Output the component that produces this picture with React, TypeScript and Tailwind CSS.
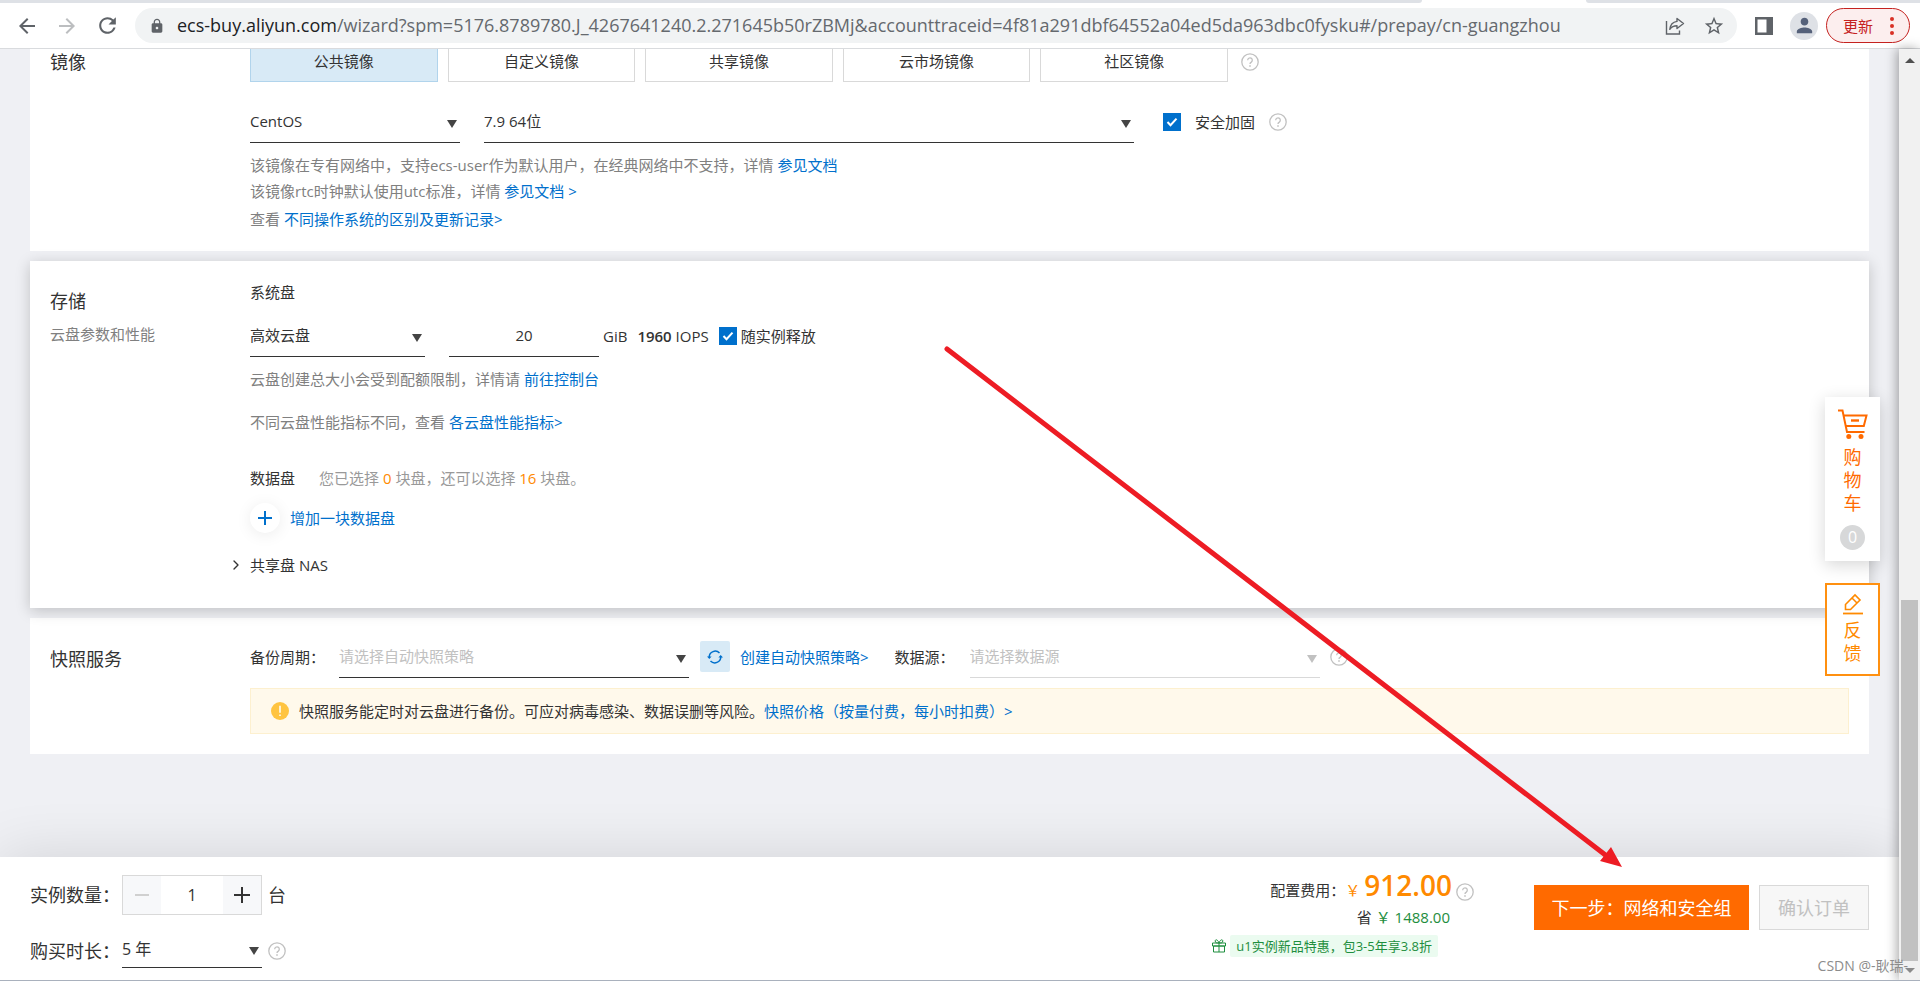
import React from 'react';
import {
  MdArrowBack,
  MdArrowForward,
  MdLock,
  MdPerson,
  MdRefresh,
  MdStarBorder,
} from 'react-icons/md';
import { ChevronRight } from 'lucide-react';
import clsx from 'clsx';

const imageTabs = ['公共镜像', '自定义镜像', '共享镜像', '云市场镜像', '社区镜像'];

const HelpIcon = () => (
  <svg className="w-[18px] h-[18px] shrink-0 text-[#c1c1c1]" viewBox="0 0 18 18" fill="none" stroke="currentColor" strokeWidth="1.3">
    <circle cx="9" cy="9" r="8.2" />
    <path d="M6.7 7.2a2.3 2.3 0 1 1 3.6 1.9c-.8.5-1.3.9-1.3 1.9" />
    <path d="M9 12.3v1.4" strokeWidth="1.6" />
  </svg>
);

interface LinkProps {
  children: React.ReactNode;
}

const Link: React.FC<LinkProps> = ({ children }) => (
  <a href="#" className="text-[#0070cc]">{children}</a>
);

interface SelectProps {
  label: string;
  value: string;
  className?: string;
  placeholder?: boolean;
  disabled?: boolean;
}

const Select: React.FC<SelectProps> = ({ label, value, className, placeholder, disabled }) => (
  <div className={clsx('relative border-b', disabled ? 'border-[#d9d9d9]' : 'border-[#333]', className)}>
    <select
      aria-label={label}
      disabled={disabled}
      className={clsx(
        'w-full h-full appearance-none bg-transparent outline-none pr-6 pb-[3px] opacity-100',
        placeholder ? 'text-[#c1c1c1]' : 'text-[#333]'
      )}
    >
      <option>{value}</option>
    </select>
    <svg
      className={clsx(
        'absolute right-[3px] top-1/2 -mt-1 w-2.5 h-[9px] pointer-events-none',
        disabled ? 'text-[#c1c1c1]' : 'text-[#444]'
      )}
      viewBox="0 0 10 9"
      fill="currentColor"
    >
      <path d="M0 1h10L5 9z" />
    </svg>
  </div>
);

interface CheckboxProps {
  label: string;
  className?: string;
}

const Checkbox: React.FC<CheckboxProps> = ({ label, className }) => (
  <label className={clsx('flex items-center', className)}>
    <span className="grid">
      <input
        type="checkbox"
        defaultChecked
        className="appearance-none w-[18px] h-[18px] bg-white border border-[#0070cc] checked:bg-[#0070cc] col-start-1 row-start-1"
      />
      <svg className="w-[18px] h-[18px] col-start-1 row-start-1 pointer-events-none" viewBox="0 0 18 18" fill="none" stroke="#fff" strokeWidth="2">
        <path d="M4.5 9l3 3.2 6-6.6" />
      </svg>
    </span>
    {label}
  </label>
);

const BrowserBar = () => (
  <header className="bg-white border-b border-[#d9dbde]">
    <div className="flex h-[3px] bg-white">
      <div className="flex-1 bg-[#dee1e6] rounded-br-sm" />
      <div className="w-[164px]" />
      <div className="w-[334px] bg-[#dee1e6] rounded-bl-sm" />
    </div>
    <div className="flex items-center h-[45px] pl-[15px] pr-2.5">
      <button aria-label="后退" className="w-6 mr-4 text-[#5f6368]"><MdArrowBack size={24} /></button>
      <button aria-label="前进" className="w-6 mr-4 text-[#bcbec0]"><MdArrowForward size={24} /></button>
      <button aria-label="刷新" className="w-6 mr-4 text-[#5f6368]"><MdRefresh size={25} /></button>
      <div className="flex flex-1 items-center h-[35px] rounded-full bg-[#f1f3f4] pl-3.5 pr-3 min-w-0">
        <MdLock size={16} className="text-[#5f6368] mr-3 shrink-0" />
        <div className="flex-1 pb-0.5 text-lg leading-6 whitespace-nowrap overflow-hidden text-[#65696e]">
          <span className="text-[#202124]">ecs-buy.aliyun.com</span>
          /wizard?spm=5176.8789780.J_4267641240.2.271645b50rZBMj&amp;accounttraceid=4f81a291dbf64552a04ed5da963dbc0fysku#/prepay/cn-guangzhou
        </div>
        <button aria-label="分享" className="mr-[18px]">
          <svg className="w-5 h-5" viewBox="0 0 20 20" fill="none" stroke="#5f6368" strokeWidth="1.4">
            <path d="M1.5 5v13h13v-3.5" />
            <path d="M12 2.5l6.5 5-6.5 5V9.7c-3.5 0-5.6 1.2-7.2 3.6C5.3 9 7.8 6 12 5.4z" strokeLinejoin="round" />
          </svg>
        </button>
        <button aria-label="收藏"><MdStarBorder size={22} className="text-[#5f6368]" /></button>
      </div>
      <button aria-label="侧边栏" className="ml-[18px]">
        <svg className="w-[18px] h-[18px]" viewBox="0 0 18 18" fill="#5f6368">
          <path d="M0 0h18v18H0zM2.5 2.5v13h9v-13z" fillRule="evenodd" />
        </svg>
      </button>
      <button aria-label="个人资料" className="ml-[17px] w-7 h-7 rounded-full bg-[#dee1e6] flex items-center justify-center">
        <MdPerson size={23} className="text-[#55617a]" />
      </button>
      <button className="ml-2 w-[84px] h-[35px] rounded-full border border-[#c5221f] bg-[#fceeee] text-[#c5221f] text-[15px] flex items-center justify-between pl-4 pr-[15px]">
        更新
        <svg className="w-1 h-[18px]" viewBox="0 0 4 18" fill="#d93025">
          <circle cx="2" cy="2" r="2" />
          <circle cx="2" cy="9" r="2" />
          <circle cx="2" cy="16" r="2" />
        </svg>
      </button>
    </div>
  </header>
);

const ImageSection = () => (
  <section className="flex bg-white px-5 pb-[19px]">
    <h2 className="w-[200px] shrink-0 text-lg leading-[26px]">镜像</h2>
    <div className="flex-1">
      <div className="flex">
        <div className="grid grid-cols-5 gap-2.5 w-[978px]">
          {imageTabs.map((tab, i) => (
            <button
              key={tab}
              className={clsx(
                'h-[33px] pb-2 border border-t-0',
                i === 0 ? 'bg-[#d8eaf6] border-[#b1d4ec]' : 'bg-white border-[#d9d9d9]'
              )}
            >
              {tab}
            </button>
          ))}
        </div>
        <div className="ml-[13px] mt-1"><HelpIcon /></div>
      </div>
      <div className="flex items-center mt-[21px]">
        <Select label="操作系统" value="CentOS" className="w-[210px] h-10" />
        <Select label="版本" value="7.9 64位" className="w-[650px] h-10 ml-6" />
        <div className="flex items-center ml-[29px] mb-[3px] gap-3.5">
          <Checkbox label="安全加固" className="gap-3.5" />
          <HelpIcon />
        </div>
      </div>
      <div className="mt-[9px] leading-[26px] text-[#808080]">
        <p>该镜像在专有网络中，支持ecs-user作为默认用户，在经典网络中不支持，详情 <Link>参见文档</Link></p>
        <p>该镜像rtc时钟默认使用utc标准，详情 <Link>参见文档 &gt;</Link></p>
        <p className="mt-0.5">查看 <Link>不同操作系统的区别及更新记录&gt;</Link></p>
      </div>
    </div>
  </section>
);

const StorageSection = () => (
  <section className="relative flex bg-white mt-2.5 px-5 pt-[19px] pb-[31px] shadow-[0_3px_14px_rgba(0,0,0,0.2)]">
    <div className="w-[200px] shrink-0 pt-2">
      <h2 className="text-lg leading-[26px]">存储</h2>
      <p className="mt-2 text-[#808080]">云盘参数和性能</p>
    </div>
    <div className="flex-1">
      <h3>系统盘</h3>
      <div className="flex items-center mt-[13px]">
        <Select label="系统盘类型" value="高效云盘" className="w-[175px] h-10" />
        <input aria-label="系统盘容量" defaultValue="20" className="w-[150px] h-10 ml-6 pb-[3px] border-b border-[#333] text-center outline-none" />
        <div className="flex items-center ml-1 mb-[3px] gap-2.5">
          <span>GiB</span>
          <span><b className="font-semibold">1960</b> IOPS</span>
          <Checkbox label="随实例释放" className="gap-1" />
        </div>
      </div>
      <p className="mt-2.5 text-[#808080]">云盘创建总大小会受到配额限制，详情请 <Link>前往控制台</Link></p>
      <p className="mt-[19px] text-[#808080]">不同云盘性能指标不同，查看 <Link>各云盘性能指标&gt;</Link></p>
      <div className="flex mt-8">
        <h3>数据盘</h3>
        <p className="ml-6 text-[#999]">
          您已选择 <span className="text-[#ff8a00]">0</span> 块盘，还可以选择 <span className="text-[#ff8a00]">16</span> 块盘。
        </p>
      </div>
      <button className="flex items-center gap-2.5 mt-[13px] text-[#0070cc]">
        <span className="w-[30px] h-[30px] rounded-full bg-white shadow-[0_2px_16px_rgba(0,0,0,0.08)] flex items-center justify-center">
          <svg className="w-[14px] h-[14px]" viewBox="0 0 14 14" stroke="currentColor" strokeWidth="2">
            <path d="M7 0v14M0 7h14" />
          </svg>
        </span>
        增加一块数据盘
      </button>
      <button className="flex items-center mt-5 -ml-[22px] gap-1.5">
        <ChevronRight className="w-4 h-4" strokeWidth={2} />
        共享盘 NAS
      </button>
    </div>
  </section>
);

const SnapshotSection = () => (
  <section className="flex bg-white mt-2.5 px-5 py-5">
    <h2 className="w-[200px] shrink-0 pt-2 text-lg leading-[26px]">快照服务</h2>
    <div className="flex-1">
      <div className="flex items-center">
        <span className="w-[89px] mb-[3px]">备份周期：</span>
        <Select label="备份周期" value="请选择自动快照策略" placeholder className="w-[350px] h-10" />
        <div className="flex items-center mb-[3px]">
          <button aria-label="刷新策略" className="w-[30px] h-[31px] ml-[11px] mr-2.5 bg-[#d8eaf6] rounded-xs flex items-center justify-center text-[#0070cc]">
            <svg className="w-4 h-4" viewBox="0 0 16 16" fill="none" stroke="currentColor" strokeWidth="1.5">
              <path d="M2.2 8A6 6 0 0 1 12.500 4M13.800 8A6 6 0 0 1 3.500 12" />
              <path d="M0 7.500h4.600L2.300 10zM11.400 8.500H16L13.700 6z" fill="currentColor" stroke="none" />
            </svg>
          </button>
          <Link>创建自动快照策略&gt;</Link>
          <span className="w-[75px] ml-[26px]">数据源：</span>
        </div>
        <Select label="数据源" value="请选择数据源" placeholder disabled className="w-[350px] h-10 mr-2.5" />
        <div className="mb-[3px]"><HelpIcon /></div>
      </div>
      <div className="flex items-center h-[46px] mt-2.5 pl-5 bg-[#fff9eb] border border-[#fdf0cf]">
        <svg className="w-[18px] h-[18px] mr-2.5" viewBox="0 0 18 18">
          <circle cx="9" cy="9" r="9" fill="#ffc440" />
          <path d="M9 3.800v7M9 12.500v1.500" stroke="#fff" strokeWidth="1.500" />
        </svg>
        <p>
          快照服务能定时对云盘进行备份。可应对病毒感染、数据误删等风险。
          <Link>快照价格（按量付费，每小时扣费）&gt;</Link>
        </p>
      </div>
    </div>
  </section>
);

const SideTools = () => (
  <aside className="absolute right-[19px] top-[348px] w-[55px] z-10 text-lg leading-[23px] text-[#ff6a00]">
    <button className="w-full h-[164px] pt-3 bg-white shadow-[0_4px_16px_rgba(0,0,0,0.16)] flex flex-col items-center">
      <svg className="w-[30px] h-[30px]" viewBox="0 0 30 30" fill="none" stroke="currentColor" strokeWidth="2">
        <path d="M0 1.500h4.500L9 23h17.500M5.500 6.500h23L25.800 17H8" />
        <path d="M13 11.500h8" strokeWidth="2.400" />
        <circle cx="10.800" cy="27.500" r="2.500" fill="currentColor" stroke="none" />
        <circle cx="23" cy="27.500" r="2.500" fill="currentColor" stroke="none" />
      </svg>
      <span className="w-[18px] mt-[7px]">购物车</span>
      <span className="w-[25px] h-[25px] mt-2.5 rounded-full bg-[#d7d8d9] text-white text-base leading-[25px]">0</span>
    </button>
    <button className="w-full h-[93px] mt-[22px] pt-2 bg-white border-2 border-[#ff9010] text-[#ff8a00] flex flex-col items-center">
      <svg className="w-[22px] h-[22px]" viewBox="0 0 22 22" fill="none" stroke="currentColor" strokeWidth="1.600">
        <path d="M3.500 16.500v-5L13 2l5 5-9.500 9.500zM10 5l5 5" />
        <path d="M1 20.500h20" strokeWidth="1.800" />
      </svg>
      <span className="w-[18px] mt-1">反馈</span>
    </button>
  </aside>
);

const CheckoutBar = () => (
  <footer className="relative flex justify-between bg-white px-[30px] pt-[18px] pb-3 shadow-[0_0_60px_rgba(0,0,0,0.12)]">
    <div className="text-lg">
      <div className="flex items-center">
        <label htmlFor="count" className="w-[92px]">实例数量：</label>
        <div className="flex w-[140px] h-10 border border-[#d9d9d9] mr-1.5">
          <button aria-label="减少" disabled className="w-[38px] bg-[#f7f8fa] flex items-center justify-center">
            <svg className="w-4 h-4" viewBox="0 0 16 16" stroke="#d0d0d0" strokeWidth="2"><path d="M1 8h14" /></svg>
          </button>
          <input id="count" defaultValue="1" className="flex-1 min-w-0 text-center text-base outline-none" />
          <button aria-label="增加" className="w-[38px] bg-[#f7f8fa] flex items-center justify-center">
            <svg className="w-4 h-4" viewBox="0 0 16 16" stroke="#333" strokeWidth="2"><path d="M0 8h16M8 0v16" /></svg>
          </button>
        </div>
        台
      </div>
      <div className="flex items-center mt-[18px]">
        <span className="w-[92px]">购买时长：</span>
        <Select label="购买时长" value="5 年" className="w-[140px] h-[35px] text-base mr-1.5" />
        <HelpIcon />
      </div>
    </div>
    <div className="flex items-start gap-[60px]">
      <div className="flex flex-col items-end -mt-1.5">
        <div className="flex items-baseline h-8">
          <span>配置费用：</span>
          <span className="text-[#ff8a00] mr-1">￥</span>
          <span className="text-[#ff8a00] text-[28px] leading-8 font-semibold mr-1">912.00</span>
          <span className="self-end"><HelpIcon /></span>
        </div>
        <p className="pr-6 mt-1 text-[#1e8e3e]"><span className="text-[#333]">省</span> ￥ 1488.00</p>
        <div className="flex items-center pr-9 mt-1.5 text-[13px] text-[#1e8e3e]">
          <svg className="w-[14px] h-[14px] mr-1" viewBox="0 0 14 14" fill="none" stroke="currentColor" strokeWidth="1">
            <path d="M.5 4h13v3H.5zM1.500 7h11v6h-11zM7 4v9" />
            <path d="M7 4C6 .5 3.200 0 3.200 2S5 4 7 4zM7 4c1-3.500 3.800-4 3.800-2S9 4 7 4z" />
          </svg>
          <span className="px-1.5 leading-[22px] rounded-xs bg-[#ebfbf0]">u1实例新品特惠，包3-5年享3.8折</span>
        </div>
      </div>
      <div className="flex gap-2.5 mt-2.5 text-lg">
        <button className="w-[215px] h-[45px] bg-[#ff6a00] text-white">下一步：网络和安全组</button>
        <button disabled className="w-[110px] h-[45px] bg-[#f7f7f7] border border-[#d9d9d9] text-[#c1c1c1]">确认订单</button>
      </div>
    </div>
  </footer>
);

const Scrollbar = () => (
  <div className="relative w-[21px] shrink-0 flex flex-col items-center bg-[#f1f1f1] shadow-[-2px_0_12px_rgba(0,0,0,0.35)]">
    <svg className="w-2.5 h-[5px] mt-[9px] mb-auto" viewBox="0 0 10 5" fill="#505050"><path d="M0 5h10L5 0z" /></svg>
    <div className="w-[17px] h-[361px] bg-[#c1c1c1]" />
    <svg className="w-2.5 h-[5px] my-[7px]" viewBox="0 0 10 5" fill="#8a8a8a"><path d="M0 0h10L5 5z" /></svg>
  </div>
);

// hand-drawn pointer towards the next-step button
const Pointer = () => (
  <svg className="absolute left-[940px] top-[340px] w-[690px] h-[535px] z-20 pointer-events-none" viewBox="0 0 690 535">
    <path d="M7 9L668 517" stroke="#ed1c24" strokeWidth="5" strokeLinecap="round" />
    <path d="M682 527l-11-20-3 7-7 6-1 1z M671 507L660 521l22 6z" fill="#ed1c24" />
  </svg>
);

const App = () => {
  return (
    <div className="relative h-screen flex flex-col overflow-hidden border-b border-[#a9b1bd] text-[15px] leading-6 text-[#333] font-['Open_Sans','Noto_Sans_CJK_SC',sans-serif]">
      <BrowserBar />
      <div className="relative flex flex-1 min-h-0">
        <div className="relative flex flex-1 flex-col min-w-0">
          <main className="flex-1 min-h-0 overflow-hidden bg-[#eff0f4] px-[30px]">
            <ImageSection />
            <StorageSection />
            <SnapshotSection />
          </main>
          <CheckoutBar />
          <SideTools />
        </div>
        <Scrollbar />
      </div>
      <Pointer />
      <span className="absolute right-3 bottom-1 z-20 text-sm text-[#8c8c8c]">CSDN @-耿瑞-</span>
    </div>
  );
};

export default App;
